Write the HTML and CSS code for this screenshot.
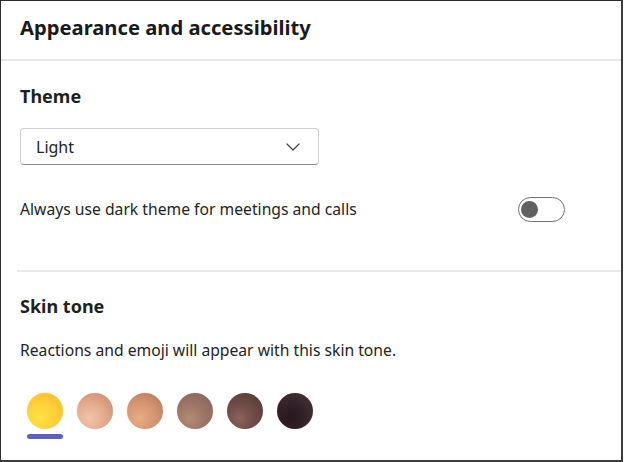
FILE: index.html
```
<!DOCTYPE html>
<html lang="en">
<head>
<meta charset="utf-8">
<link rel="stylesheet" href="styles.css">
</head>
<body>
<div class="frame">
  <header class="header">
    <h1 class="title">Appearance and accessibility</h1>
  </header>
  <section class="section theme">
    <h2 class="heading">Theme</h2>
    <div class="select">
      <span class="select-value">Light</span>
      <svg class="chevron" width="14" height="8" viewBox="0 0 14 8"><path d="M1 1l6 6 6-6" fill="none" stroke="#424242" stroke-width="1.2" stroke-linecap="round" stroke-linejoin="round"/></svg>
    </div>
    <div class="row">
      <span class="label">Always use dark theme for meetings and calls</span>
      <span class="toggle"><span class="knob"></span></span>
    </div>
  </section>
  <div class="divider"></div>
  <section class="section skin">
    <h2 class="heading">Skin tone</h2>
    <p class="label desc">Reactions and emoji will appear with this skin tone.</p>
    <div class="tones">
      <div class="tone-item selected"><span class="tone t1"></span><span class="bar"></span></div>
      <div class="tone-item"><span class="tone t2"></span></div>
      <div class="tone-item"><span class="tone t3"></span></div>
      <div class="tone-item"><span class="tone t4"></span></div>
      <div class="tone-item"><span class="tone t5"></span></div>
      <div class="tone-item"><span class="tone t6"></span></div>
    </div>
  </section>
</div>
</body>
</html>
```
FILE: styles.css
```
* { box-sizing: border-box; }
html, body { margin: 0; padding: 0; background: #fff; }
body { font-family: "Noto Sans", "Open Sans", sans-serif; color: #242424; }
.frame {
  width: 623px;
  height: 462px;
  border-left: 1px solid #2b2b2b;
  border-top: 1px solid #2b2b2b;
  border-right: 2px solid #3c3c3c;
  border-bottom: 2px solid #3c3c3c;
  overflow: hidden;
}
.header {
  height: 60px;
  border-bottom: 2px solid #e8e8e8;
  padding: 12px 0 0 19px;
}
.title {
  margin: 0;
  font-size: 20.2px;
  font-weight: 700;
  line-height: 28px;
  color: #1a1a1a;
}
.section { padding-left: 19px; }
.theme { padding-top: 22px; }
.heading {
  margin: 0;
  font-size: 18px;
  font-weight: 700;
  line-height: 26px;
  color: #1f1f1f;
}
.select {
  margin-top: 19px;
  width: 299px;
  height: 37px;
  border: 1px solid #d1d1d1;
  border-bottom-color: #8a8a8a;
  border-radius: 4px;
  display: flex;
  align-items: center;
  justify-content: space-between;
  padding: 0 18px 0 15px;
}
.select-value { font-size: 16px; color: #242424; }
.row {
  margin-top: 32px;
  width: 545px;
  height: 24px;
  display: flex;
  align-items: center;
  justify-content: space-between;
}
.label { font-size: 15.7px; color: #242424; }
.toggle {
  width: 47px;
  height: 25px;
  border: 1.5px solid #707070;
  border-radius: 13px;
  display: flex;
  align-items: center;
  padding-left: 2px;
}
.knob {
  width: 17px;
  height: 17px;
  border-radius: 50%;
  background: #616161;
}
.divider {
  margin: 49px 0 0 16px;
  height: 2px;
  background: #e8e8e8;
}
.skin { padding-top: 21px; }
.desc { margin: 20px 0 0; line-height: 22px; }
.tones {
  margin-top: 32px;
  margin-left: 7px;
  display: flex;
  gap: 14px;
}
.tone-item {
  width: 36px;
  display: flex;
  flex-direction: column;
  gap: 5px;
}
.tone {
  width: 36px;
  height: 36px;
  border-radius: 50%;
  display: block;
  box-shadow: 0 0 0 0.5px rgba(240, 220, 200, 0.6);
}
.bar {
  width: 36px;
  height: 5px;
  border-radius: 3px;
  background: #5b5fc7;
}
.t1 { background: radial-gradient(circle at 35% 70%, #ffe042 0%, #ffd23a 40%, #ffb52c 100%); }
.t2 { background: radial-gradient(circle at 35% 70%, #f3c4a8 0%, #e3aa8d 45%, #c58569 100%); }
.t3 { background: radial-gradient(circle at 35% 70%, #e8ad83 0%, #d49570 45%, #b2755a 100%); }
.t4 { background: radial-gradient(circle at 35% 70%, #b48b73 0%, #9c7465 45%, #84605c 100%); }
.t5 { background: radial-gradient(circle at 35% 70%, #8a635b 0%, #6d4a45 45%, #533534 100%); }
.t6 { background: radial-gradient(circle at 35% 70%, #2a161c 0%, #33222a 45%, #4a3a34 100%); }
```
